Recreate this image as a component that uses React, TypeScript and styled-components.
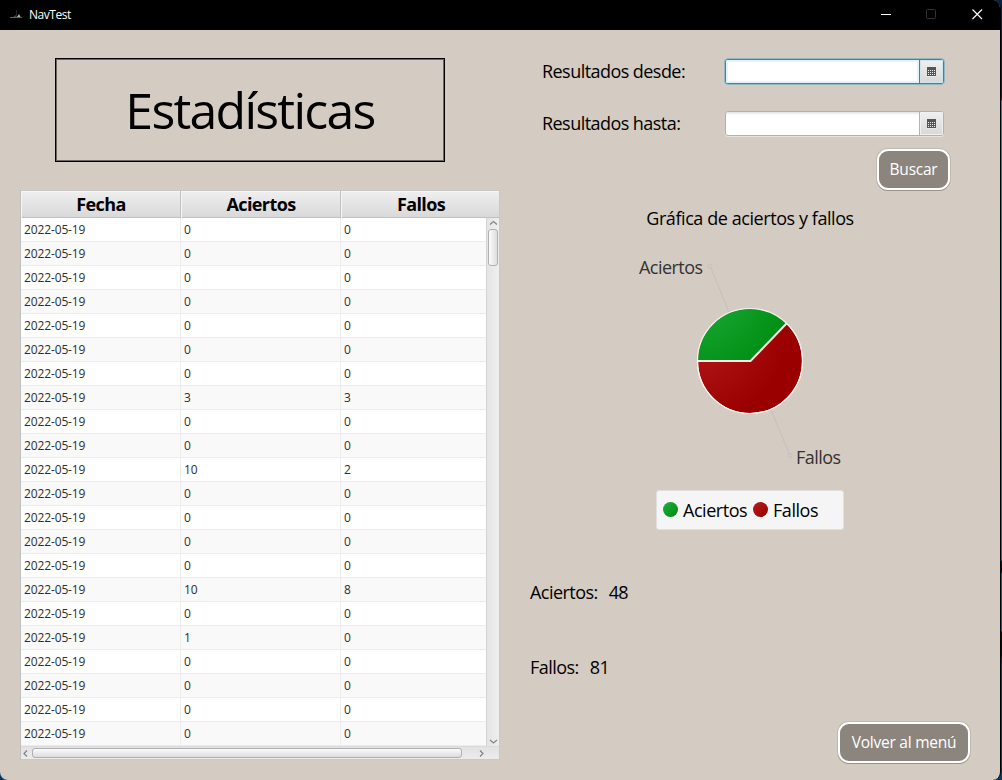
import React from 'react';
import styled, { createGlobalStyle } from 'styled-components';

const Global = createGlobalStyle`
  html, body { margin: 0; padding: 0; background: #03101f; }
  * { box-sizing: border-box; }
  body { font-family: "Open Sans", "Noto Sans", sans-serif; color: #000; overflow: hidden; }
`;

const Desktop = styled.div`
  width: 1002px; height: 780px; padding-right: 1px;
  background: linear-gradient(to bottom, #04214b 0 100px, #0b93b5 101px 200px, #0878a0 560px, #05101c 562px 572px, #06628f 574px 630px, #05101c 632px 656px, #063a66 660px);
`;
const Window = styled.div`
  width: 1001px; height: 780px; display: flex; flex-direction: column;
  background: #d4cbc2; border-right: 1px solid #000; border-radius: 0 8px 8px 8px; overflow: hidden;
`;
const TitleBar = styled.header`
  height: 30px; flex: none; background: #000; color: #fff; display: flex; align-items: center;
  padding-left: 10px; font-size: 12px;
`;
const AppName = styled.span`
  margin-left: 7px; flex: 1; line-height: 30px; letter-spacing: -0.45px;
`;
const Controls = styled.svg` display: block; width: 122px; height: 30px; `;
const Content = styled.main` display: flex; flex: 1; `;
const Left = styled.section` width: 510px; padding: 28px 0 0 21px; `;
const Right = styled.section` flex: 1; padding-left: 20px; display: flex; flex-direction: column; `;

const Heading = styled.h1`
  margin: 0 0 28px 34px; width: 390px; height: 104px; border: 1.5px solid #000;
  outline: 0; box-shadow: inset 0 0 0 1px #6a6661;
  display: flex; align-items: center; justify-content: center;
  font-weight: 400; font-size: 50px; letter-spacing: -1.75px;
`;

const Table = styled.div`
  width: 478px; height: 570px; background: #fff;
  border: solid #c8c8c8; border-width: 0 0 1px 0; box-shadow: -1px 0 0 #c0c0c0, 1px 0 0 #c8c8c8;
`;
const HeadRow = styled.div`
  display: grid; grid-template-columns: 160px 160px 158px; height: 28px;
  border-top: 1px solid #c8c8c8; border-bottom: 1px solid #c0c0c0;
  background: linear-gradient(#efefef, #d9d9d9);
`;
const HeadCell = styled.div`
  border-right: 1px solid #c0c0c0; box-shadow: inset 1px 1px 0 #f6f6f6;
  text-align: center; font-weight: 700; font-size: 18px; line-height: 27px; letter-spacing: -0.6px;
  padding-left: 1px;
  &:last-child { border-right: 0; padding-left: 2px; }
`;
const Middle = styled.div` display: flex; height: 528px; `;
const Rows = styled.div` width: 465px; `;
const Row = styled.div<{ $odd: boolean }>`
  display: grid; grid-template-columns: 160px 160px 145px; height: 24px;
  background: ${p => (p.$odd ? '#f9f9f9' : '#fff')}; border-bottom: 1px solid #ececec;
`;
const Cell = styled.div`
  padding-left: 3px; border-right: 1px solid #ececec; font-size: 12px; line-height: 24px;
  color: #2e2e2e; letter-spacing: -0.13px;
  &:last-child { border-right-color: transparent; }
`;
const VBar = styled.div`
  width: 13px; border-left: 1px solid #d4d4d4;
  background: linear-gradient(to right, #e4e4e4, #efefef);
  display: flex; flex-direction: column; align-items: center;
`;
const VThumb = styled.div`
  width: 10px; height: 37px; border: 1px solid #b0b0b0; border-radius: 3px;
  background: linear-gradient(to right, #fbfbfb, #dedede);
`;
const HBar = styled.div`
  height: 13px; display: flex; align-items: center; border-top: 1px solid #dadada;
  background: linear-gradient(#e2e2e2, #ececec);
`;
const HThumb = styled.div`
  width: 430px; height: 10px; border: 1px solid #b0b0b0; border-radius: 3px;
  background: linear-gradient(#fbfbfb, #dcdcdc);
`;
const Arrow = styled.svg` display: block; flex: none; fill: none; stroke: #858585; stroke-width: 1.3; `;
const Spacer = styled.div` flex: 1; `;

const Field = styled.div<{ $top: number }>`
  display: flex; align-items: center; height: 26px; margin: ${p => p.$top}px 0 0 12px;
`;
const FieldLabel = styled.label`
  width: 183px; font-size: 18px; line-height: 26px; letter-spacing: -0.55px;
`;
const Picker = styled.div<{ $focus?: boolean }>`
  display: flex; width: 219px; height: 25px; border-radius: 3px; background: #fff; overflow: hidden;
  border: 1px solid ${p => (p.$focus ? '#0f94c4' : '#b4b0ac')};
  outline: ${p => (p.$focus ? '1px solid rgba(15,148,196,.35)' : 'none')};
  box-shadow: ${p => (p.$focus ? 'none' : '0 1px 0 #e8e3de')};
`;
const Input = styled.div<{ $focus?: boolean }>`
  flex: 1;
  box-shadow: ${p => (p.$focus ? 'inset 0 0 0 2px #e4f3f9' : 'inset 0 3px 3px -2px #d8d8d8')};
`;
const PickButton = styled.div<{ $focus?: boolean }>`
  width: 24px; display: flex; align-items: center; justify-content: center; padding-top: 1px;
  border-left: 1px solid ${p => (p.$focus ? '#0f94c4' : '#b4b4b4')};
  background: linear-gradient(#f0f0f0, #d8d8d8);
  box-shadow: inset 0 0 0 1px ${p => (p.$focus ? '#cfe4ec' : '#f0f0f0')};
`;

const Button = styled.button<{ $w: number }>`
  width: ${p => p.$w}px; height: 41px; padding: 0 0 1px; border: 2px solid #fff; border-radius: 11px;
  background: #8b857e; color: #fff; font-family: inherit; font-size: 15.5px; letter-spacing: -0.25px;
  white-space: nowrap;
  box-shadow: 0 1px 0 #98928c, 0 0 0 1px rgba(120,112,104,.2);
`;
const SearchLine = styled.div` display: flex; margin: 13px 0 0 347px; `;

const Chart = styled.div`
  width: 340px; margin-left: 50px; height: 339px; display: flex; flex-direction: column; align-items: center;
  > * { flex: none; }
`;
const ChartTitle = styled.h2`
  margin: 14px 0 0 0; font-size: 18px; line-height: 28px; font-weight: 400; letter-spacing: -0.43px; white-space: nowrap;
`;
const Pie = styled.svg` display: block; margin-top: 17px; width: 340px; height: 220px; font-size: 18px; `;
const Legend = styled.div`
  width: 188px; height: 40px; margin-top: 21px; padding-left: 6px; display: flex; align-items: center;
  background: #f5f5f5; border: 1px solid #e0e0e0; border-radius: 3px; font-size: 18px; line-height: 24px; padding-bottom: 1px;
`;
const Dot = styled.i<{ $c: string }>`
  width: 15px; height: 15px; border-radius: 50%; margin-right: 5px; background: ${p => p.$c};
`;
const LegendText = styled.span<{ $w: number }>` width: ${p => p.$w}px; letter-spacing: -0.45px; white-space: nowrap; `;

const Total = styled.div<{ $top: number }>`
  display: flex; gap: 11px; margin-top: ${p => p.$top}px; font-size: 18px; line-height: 26px; letter-spacing: -0.55px;
`;
const Footer = styled.div` display: flex; margin: 42px 0 0 308px; `;

const values: Record<number, [number, number]> = {
  7: [3, 3], 10: [10, 2], 15: [10, 8], 17: [1, 0],
};
const rows = Array.from({ length: 22 }, (_, i) => values[i] || [0, 0]);

const Calendar = () => (
  <svg width="9" height="10" viewBox="0 0 9 10" shapeRendering="crispEdges">
    <path fill="#555" d="M0 0h9v9H0z" />
    <path fill="#e8e8e8" d="M0 9h9v1H0z" />
    {[3, 5, 7].map(y => [1, 3, 5, 7].map(x => <rect key={`${x}-${y}`} x={x} y={y} width="1" height="1" fill="#eee" />))}
  </svg>
);

const DateField = ({ label, top, focus }: { label: string; top: number; focus?: boolean }) => (
  <Field $top={top}>
    <FieldLabel>{label}</FieldLabel>
    <Picker $focus={focus}>
      <Input $focus={focus} />
      <PickButton $focus={focus}><Calendar /></PickButton>
    </Picker>
  </Field>
);

export default function App() {
  return (
    <Desktop>
      <Global />
      <Window>
        <TitleBar>
          <svg width="12" height="12" viewBox="0 0 12 12">
            <path d="M0 8.500h12" stroke="#526868" />
            <path d="M6.500 1v7" stroke="#1d2829" />
            <path d="M7 8L9 5 10.500 8z" fill="#a9bdb9" />
            <path d="M3 8h3V6z" fill="#384744" />
          </svg>
          <AppName>NavTest</AppName>
          <Controls viewBox="0 0 122 30" fill="none">
            <path d="M3 14.500h10" stroke="#fff" />
            <rect x="48.500" y="9.500" width="9" height="9" rx="1" stroke="#333" />
            <path d="M94.500 9.500l9.500 9.500M104 9.500L94.500 19" stroke="#fff" strokeWidth="1.100" />
          </Controls>
        </TitleBar>
        <Content>
          <Left>
            <Heading>Estadísticas</Heading>
            <Table>
              <HeadRow>
                <HeadCell>Fecha</HeadCell><HeadCell>Aciertos</HeadCell><HeadCell>Fallos</HeadCell>
              </HeadRow>
              <Middle>
                <Rows>
                  {rows.map(([hits, misses], i) => (
                    <Row key={i} $odd={i % 2 === 1}>
                      <Cell>2022-05-19</Cell><Cell>{hits}</Cell><Cell>{misses}</Cell>
                    </Row>
                  ))}
                </Rows>
                <VBar>
                  <Arrow width="9" height="11"><path d="M1 6.500l3.500-3 3.500 3" /></Arrow>
                  <VThumb />
                  <Spacer />
                  <Arrow width="9" height="9"><path d="M1 3l3.500 3L8 3" /></Arrow>
                </VBar>
              </Middle>
              <HBar>
                <Arrow width="11" height="9"><path d="M6 1.500l-3 3 3 3" /></Arrow>
                <HThumb />
                <Arrow width="24" height="9"><path d="M18 1.500l3 3-3 3" /></Arrow>
              </HBar>
            </Table>
          </Left>
          <Right>
            <DateField label="Resultados desde:" top={28} focus />
            <DateField label="Resultados hasta:" top={26} />
            <SearchLine><Button $w={73}>Buscar</Button></SearchLine>
            <Chart>
              <ChartTitle>Gráfica de aciertos y fallos</ChartTitle>
              <Pie viewBox="580 249 340 220">
                <defs>
                  <radialGradient id="shadeG" gradientUnits="userSpaceOnUse" cx="700" cy="290" r="95">
                    <stop offset="0" stopColor="#1cae3a" /><stop offset="1" stopColor="#008c12" />
                  </radialGradient>
                  <radialGradient id="shadeR" gradientUnits="userSpaceOnUse" cx="690" cy="325" r="100">
                    <stop offset="0" stopColor="#b81c1c" /><stop offset="1" stopColor="#9b0000" />
                  </radialGradient>
                </defs>
                <g fill="none" stroke="#c3c1c0">
                  <path d="M729 312L711 268M771 410l18 43" />
                  <circle cx="710" cy="266" r="2" /><circle cx="790" cy="455.500" r="2" />
                </g>
                <circle cx="750" cy="361" r="52.500" fill="url(#shadeR)" stroke="#f4f0ec" strokeWidth="1.200" />
                <path d="M750 361H697.500A52.500 52.500 0 0 1 786.500 323.500Z" fill="url(#shadeG)" />
                <circle cx="750" cy="361" r="52.500" fill="none" stroke="#f4f0ec" strokeWidth="1.200" />
                <path d="M697.500 361H750.500L786.500 323.500" fill="none" stroke="#f4f0ec" strokeWidth="2" />
                <text x="639" y="274" fill="#333" textLength="64">Aciertos</text>
                <text x="796" y="464" fill="#333" textLength="45">Fallos</text>
              </Pie>
              <Legend>
                <Dot $c="linear-gradient(135deg,#1eb03c,#008812)" /><LegendText $w={70}>Aciertos</LegendText>
                <Dot $c="linear-gradient(135deg,#b81c1c,#960000)" /><LegendText $w={50}>Fallos</LegendText>
              </Legend>
            </Chart>
            <Total $top={50}><span>Aciertos:</span><span>48</span></Total>
            <Total $top={49}><span>Fallos:</span><span>81</span></Total>
            <Footer><Button $w={132}>Volver al menú</Button></Footer>
          </Right>
        </Content>
      </Window>
    </Desktop>
  );
}
